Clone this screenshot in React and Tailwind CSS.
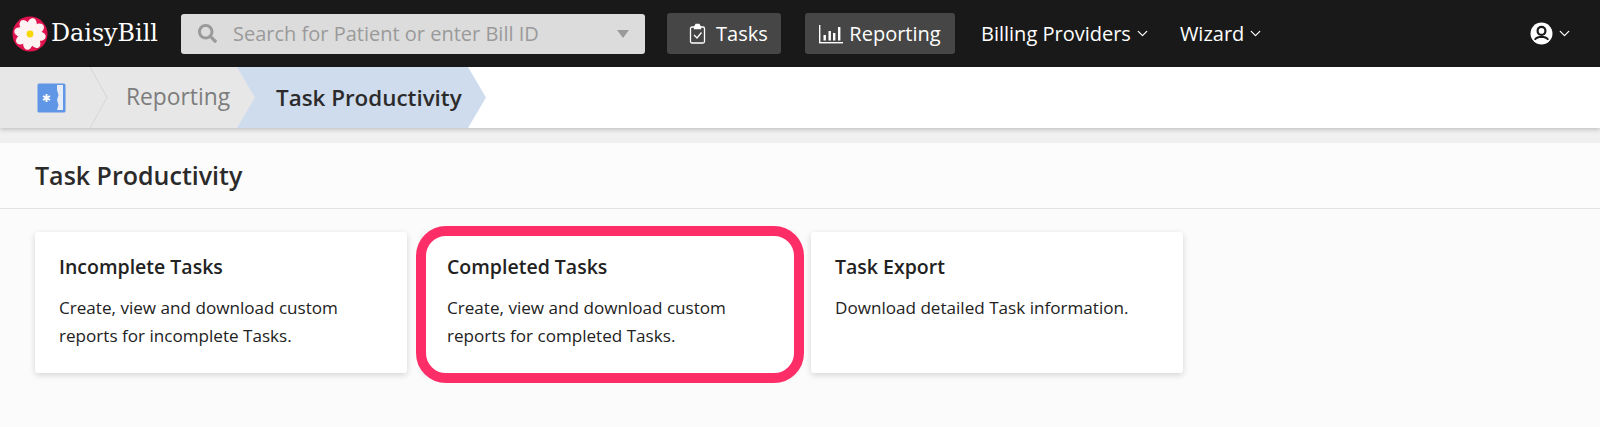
import React from 'react';
import { ChevronDown } from 'lucide-react';
import { FaSearch } from 'react-icons/fa';

const font = { fontFamily: '"Open Sans", "Lato", sans-serif' };

const Daisy = () => (
  <svg width="36" height="36" viewBox="0 0 36 36" className="shrink-0">
    <circle cx="18" cy="18" r="17.5" fill="#e0134f" />
    {[0, 45, 90, 135, 180, 225, 270, 315].map((a) => (
      <ellipse key={a} cx="18" cy="8.8" rx="4.8" ry="6.8" fill="#fdf3f3" transform={`rotate(${a + 12} 18 18)`} />
    ))}
    <circle cx="18" cy="18" r="5" fill="#fdf3f3" />
    <circle cx="18" cy="18" r="3.4" fill="#f7d800" />
  </svg>
);

const TasksIcon = () => (
  <svg width="17" height="22" viewBox="0 0 17 22" fill="none" stroke="#fff" strokeWidth="1.3">
    <rect x="1.5" y="4" width="14" height="16" rx="1.5" />
    <path d="M5.5 4 L7 1.5 H10 L11.5 4 V5.5 H5.5 Z" fill="#fff" />
    <path d="M5 12 L8 15 L12.5 9.5" />
  </svg>
);

const ReportIcon = () => (
  <svg width="24" height="20" viewBox="0 0 24 20" fill="#fff">
    <rect x="0" y="1" width="1.4" height="18" />
    <rect x="0" y="18" width="24" height="1.4" />
    <rect x="4.5" y="11" width="2.4" height="5.5" />
    <rect x="9.5" y="7" width="2.4" height="9.5" />
    <rect x="14" y="9" width="2.4" height="7.5" />
    <rect x="19" y="3" width="2.4" height="13.5" />
  </svg>
);

const UserIcon = () => (
  <svg width="23" height="23" viewBox="0 0 22 22">
    <circle cx="11" cy="11" r="10.5" fill="#fff" />
    <circle cx="11" cy="8.5" r="4.8" fill="#191919" />
    <circle cx="11" cy="8.5" r="2.7" fill="#fff" />
    <path d="M3.8 16.5 C5.5 13.8 8 13.2 11 13.2 C14 13.2 16.5 13.8 18.2 16.5 L16.8 17.4 C15.5 15.6 13.5 15.2 11 15.2 C8.5 15.2 6.5 15.6 5.2 17.4 Z" fill="#191919" />
  </svg>
);

const BookIcon = () => (
  <svg width="29" height="30" viewBox="0 0 29 30">
    <rect x="0.5" y="0.5" width="28" height="29" rx="1.5" fill="#5f96e6" />
    <path d="M20 2 H26 V27 H20 L21.5 22 L20 17 L21.5 12 L20 7 Z" fill="#e6edf7" />
    <path d="M9.5 11 V19 M6 13 L13 17 M13 13 L6 17" stroke="#fff" strokeWidth="1.9" />
  </svg>
);

const Card = ({ title, children }) => (
  <div className="w-[372px] h-[141px] bg-white rounded-[3px] shadow-[0_2px_6px_rgba(0,0,0,0.16)] px-[24px] pt-[22px]">
    <h3 className="text-[19.5px] leading-[26px] font-semibold text-[#222]">{title}</h3>
    <p className="mt-[14px] text-[17.1px] leading-[27.5px] text-[#222]">{children}</p>
  </div>
);

export default function App() {
  return (
    <div className="h-[427px] bg-[#fbfbfb] overflow-hidden" style={font}>
      <header className="h-[67px] bg-[#191919] flex items-center text-white text-[20px]">
        <div className="ml-[12px] w-[169px] flex items-center gap-[3px]">
          <Daisy />
          <span className="text-[23.8px]" style={{ fontFamily: '"DejaVu Serif", serif' }}>DaisyBill</span>
        </div>
        <div className="w-[464px] h-[40px] bg-[#dcdcdc] rounded-[3px] flex items-center pl-[17px] pr-[16px] text-[#9a9a9a]">
          <FaSearch className="text-[19px] mr-[16px]" />
          <span className="flex-1">Search for Patient or enter Bill ID</span>
          <span className="w-0 h-0 border-x-[6px] border-x-transparent border-t-[8px] border-t-[#9a9a9a]" />
        </div>
        <div className="ml-[22px] w-[114px] h-[41px] bg-[#464646] rounded-[3px] flex items-center pl-[22px] gap-[10px]">
          <TasksIcon />
          <span>Tasks</span>
        </div>
        <div className="ml-[24px] w-[150px] h-[41px] bg-[#464646] rounded-[3px] flex items-center justify-center gap-[6px]">
          <ReportIcon />
          <span>Reporting</span>
        </div>
        <div className="ml-[26px] flex items-center gap-[3px]">
          <span>Billing Providers</span>
          <ChevronDown size={17} strokeWidth={1.75} />
        </div>
        <div className="ml-[29px] flex items-center gap-[3px]">
          <span>Wizard</span>
          <ChevronDown size={17} strokeWidth={1.75} />
        </div>
        <div className="ml-auto mr-[27px] flex items-center gap-[3px]">
          <UserIcon />
          <ChevronDown size={17} strokeWidth={1.75} />
        </div>
      </header>

      <nav className="h-[61px] bg-white flex shadow-[0_2px_4px_rgba(0,0,0,0.18)] relative text-[22.4px]">
        <div className="w-[107px] bg-[#e7e7e7] flex items-center pl-[37px] relative">
          <BookIcon />
          <svg width="18" height="61" viewBox="0 0 18 61" fill="none" className="absolute left-[90px] top-0">
            <path d="M0 0 L17 30.5 L0 61" stroke="#d6d6d6" />
          </svg>
        </div>
        <div className="w-[149px] bg-[#e7e7e7] flex items-center pl-[20px] -ml-[1px] text-[22.8px] text-[#7d7d7d]">
          Reporting
        </div>
        <div className="-ml-[18px] w-[249px] bg-[#cfdcee] flex items-center pl-[39px] font-semibold text-[#2b2b2b] [clip-path:polygon(0_0,231px_0,100%_50%,231px_100%,0_100%,18px_50%)]">
          Task Productivity
        </div>
      </nav>

      <div className="h-[15px] bg-[#f0f0f0]" />

      <section className="h-[66px] bg-[#fcfcfc] border-b border-b-[#e2e2e2] flex items-center pl-[35px]">
        <h1 className="text-[25px] font-semibold text-[#2b2b2b]">Task Productivity</h1>
      </section>

      <main className="flex gap-[16px] pl-[35px] pt-[23px]">
        <Card title="Incomplete Tasks">
          Create, view and download custom
          <br />
          reports for incomplete Tasks.
        </Card>
        <div className="relative">
          <Card title="Completed Tasks">
            Create, view and download custom
            <br />
            reports for completed Tasks.
          </Card>
          <div className="absolute -left-[7px] -top-[6px] w-[388px] h-[157px] border-[10px] border-[#fd2d67] rounded-[30px]" />
        </div>
        <Card title="Task Export">Download detailed Task information.</Card>
      </main>
    </div>
  );
}
